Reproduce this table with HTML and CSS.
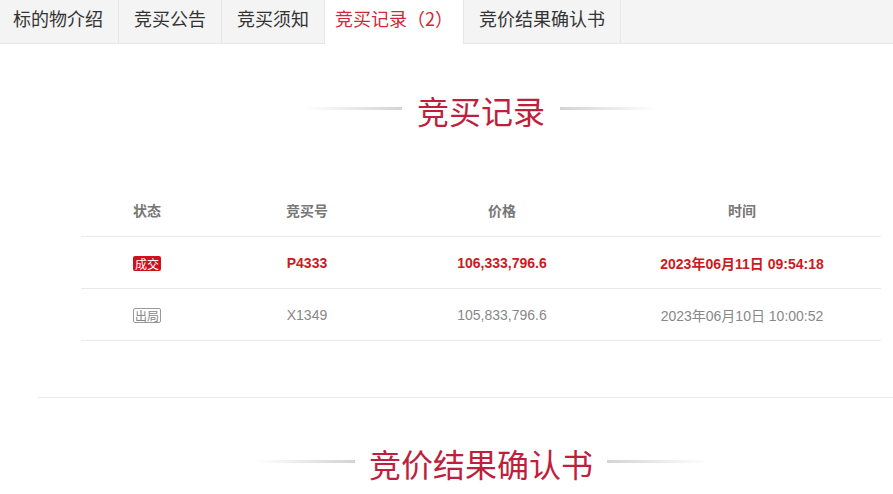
FILE: index.html
```html
<!DOCTYPE html>
<html lang="zh-CN">
<head>
<meta charset="utf-8">
<title>竞买记录</title>
<link rel="stylesheet" href="styles.css">
</head>
<body>
<nav class="tabs">
  <a class="tab tab-first">标的物介绍</a>
  <a class="tab">竞买公告</a>
  <a class="tab">竞买须知</a>
  <a class="tab tab-active">竞买记录（2）</a>
  <a class="tab">竞价结果确认书</a>
</nav>
<main class="content">
  <h2 class="section-title"><span class="line line-left"></span><span class="title-text">竞买记录</span><span class="line line-right"></span></h2>
  <div class="records">
    <div class="row row-head">
      <div class="cell">状态</div>
      <div class="cell">竞买号</div>
      <div class="cell">价格</div>
      <div class="cell">时间</div>
    </div>
    <div class="row row-win">
      <div class="cell"><span class="badge badge-win">成交</span></div>
      <div class="cell">P4333</div>
      <div class="cell">106,333,796.6</div>
      <div class="cell">2023年06月11日 09:54:18</div>
    </div>
    <div class="row row-out">
      <div class="cell"><span class="badge badge-out">出局</span></div>
      <div class="cell">X1349</div>
      <div class="cell">105,833,796.6</div>
      <div class="cell">2023年06月10日 10:00:52</div>
    </div>
  </div>
  <hr class="divider">
  <h2 class="section-title section-title-2"><span class="line line-left"></span><span class="title-text">竞价结果确认书</span><span class="line line-right"></span></h2>
</main>
</body>
</html>
```
FILE: styles.css
```css
html, body {
  margin: 0;
  padding: 0;
  background: #fff;
  overflow: hidden;
}
body {
  font-family: "Liberation Sans", "Noto Sans CJK SC", sans-serif;
  width: 893px;
  height: 494px;
}
.tabs {
  display: flex;
  height: 43px;
  background: #f4f4f4;
  border-bottom: 1px solid #e6e6e6;
}
.tab {
  display: block;
  padding: 0 15px 6px;
  line-height: 36px;
  font-family: "Noto Sans CJK SC", sans-serif;
  font-size: 18px;
  color: #333;
  border-right: 1px solid #e6e6e6;
  white-space: nowrap;
}
.tab-first {
  padding-left: 13px;
}
.tab-active {
  background: #fff;
  color: #d22833;
  padding: 0 10px 6px;
  height: 44px;
  box-sizing: border-box;
  margin-bottom: -1px;
}
.content {
  margin-left: 38px;
  width: 886px;
}
.section-title {
  display: flex;
  align-items: center;
  justify-content: center;
  gap: 15px;
  margin: 46px 0 0;
  height: 40px;
  font-weight: normal;
}
.title-text {
  font-family: "Noto Sans CJK SC", sans-serif;
  font-size: 32px;
  line-height: 40px;
  color: #be1f3d;
}
.line {
  display: block;
  width: 97px;
  height: 3px;
  margin-top: -3px;
}
.line-left {
  background: linear-gradient(to right, rgba(215,215,215,0), #d3d3d3);
}
.line-right {
  background: linear-gradient(to left, rgba(215,215,215,0), #d3d3d3);
}
.records {
  width: 800px;
  margin: 54px auto 0;
}
.row {
  display: grid;
  grid-template-columns: 132px 188px 202px 278px;
  height: 52px;
  align-items: center;
  border-bottom: 1px solid #e8e8e8;
  box-sizing: border-box;
  font-size: 14px;
}
.cell {
  text-align: center;
  white-space: nowrap;
}
.row-head {
  font-weight: bold;
  color: #777;
  height: 53px;
}
.row-win {
  color: #cc1a22;
  font-weight: bold;
}
.row-out {
  color: #888;
}
.badge {
  display: inline-block;
  font-family: "Noto Sans CJK SC", sans-serif;
  font-weight: normal;
  font-size: 12px;
  line-height: 15px;
  height: 15px;
  padding: 0 2px;
  border-radius: 2px;
  box-sizing: border-box;
  vertical-align: middle;
}
.badge-win {
  background: #d0111b;
  color: #fff;
}
.badge-out {
  border: 1px solid #999;
  color: #888;
  line-height: 13px;
  padding: 0 1px;
}
.divider {
  border: 0;
  border-top: 1px solid #ebebeb;
  margin: 56px 0 0;
}
.section-title-2 {
  margin-top: 45px;
  gap: 14px;
}
.section-title-2 .line {
  width: 100px;
}
```
